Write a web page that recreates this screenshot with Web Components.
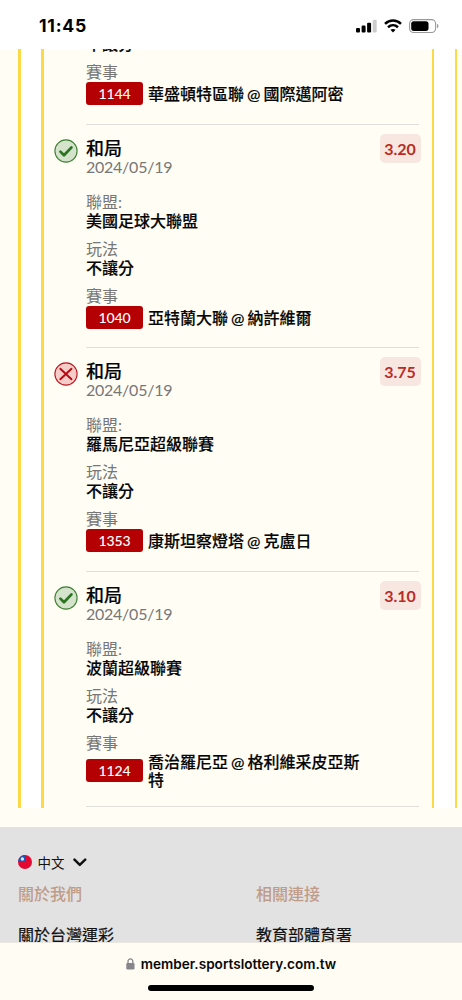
<!DOCTYPE html>
<html lang="zh-Hant">
<head>
<meta charset="utf-8">
<title>台灣運彩</title>
<style>
html,body{margin:0;height:1000px;overflow:hidden;background:#fffdf4}
body{font-family:Lato,"Noto Sans CJK TC",sans-serif}
</style>
</head>
<body>
<phone-page></phone-page>
<script>
const define = (name, html, setup) => customElements.define(name, class extends HTMLElement {
  connectedCallback() {
    if (this.shadowRoot) return;
    const t = document.createElement('template');
    t.innerHTML = html;
    this.attachShadow({mode: 'open'}).append(t.content.cloneNode(true));
    if (setup) setup(this, this.shadowRoot);
  }
});

define('status-bar', `<style>
:host{display:flex;box-sizing:border-box;height:49px;background:#fff;padding:2px 23px 0 39px;align-items:center;justify-content:space-between;font:700 17.6px/24px Inter,sans-serif;color:#000}
.t{letter-spacing:.75px}
.icons{display:flex;gap:7px;align-items:center}
svg{display:block}
</style><span class="t">11:45</span>
<div class="icons">
<svg width="21" height="14" viewBox="0 0 21 14"><rect x="0" y="9" width="4" height="4.5" rx="1.1"/><rect x="5.6" y="6.6" width="4" height="6.9" rx="1.1"/><rect x="11.1" y="3.7" width="4" height="9.8" rx="1.1"/><rect x="16.7" y=".7" width="4" height="12.8" rx="1.1" fill="#ccc"/></svg>
<svg width="18" height="14" viewBox="0 0 18 14" fill="none" stroke="#000" stroke-width="2.5"><path d="M1 4.9C5.6.5 12.4.5 17 4.9"/><path d="M4 8.3c2.9-2.6 7.1-2.6 10 0"/><path d="M6.4 10.8C8 9.6 10 9.6 11.6 10.8L9 13.5z" fill="#000" stroke="none"/></svg>
<svg width="30" height="14" viewBox="0 0 30 14"><rect x=".6" y=".6" width="26" height="12.9" rx="4" fill="none" stroke="#999" stroke-width="1.1"/><rect x="2.2" y="2.2" width="17.3" height="9.7" rx="2.6"/><path d="M28 4.8c2 .8 2 3.6 0 4.4z" fill="#999"/></svg>
</div>`);

define('result-icon', `<style>:host{display:block;width:24px;height:24px}svg{display:block}</style><svg width="24" height="24" viewBox="0 0 24 24"></svg>`, (el, root) => {
  root.querySelector('svg').innerHTML = el.getAttribute('kind') === 'lose'
    ? '<circle cx="12" cy="12" r="11.1" fill="#f4cdc8" stroke="#bd1820" stroke-width="1.1"/><path d="M6.3 6.8 17.5 17.2M17.5 6.8 6.3 17.2" stroke="#b60910" stroke-width="1.9" stroke-linecap="round"/>'
    : '<circle cx="12" cy="12" r="11.1" fill="#d5e2cc" stroke="#3c8132" stroke-width="1.1"/><path d="m6.4 12.6 3.6 3.7 7.5-7.9" fill="none" stroke="#2b7420" stroke-width="2.7" stroke-linecap="round" stroke-linejoin="round"/>';
});

define('bet-field', `<style>
:host{display:block;font-size:16px;margin-bottom:8px}
:host([last]){margin-bottom:0}
.l{height:19px;line-height:19px;color:#777}
:host([last]) .l{height:20px}
.v{line-height:20px;color:#050505;font-weight:500;-webkit-text-stroke:.15px #050505}
</style><div class="l"></div><div class="v"><slot></slot></div>`, (el, root) => {
  const l = root.querySelector('.l');
  if (el.hasAttribute('label')) l.textContent = el.getAttribute('label'); else l.remove();
});

define('match-row', `<style>
:host{display:flex;align-items:center;gap:5px;line-height:17.5px;min-height:23px}
.n{flex:none;width:57px;height:23px;border-radius:3px;background:#b40002;color:#fff;text-align:center;font:500 14px/23px Lato,sans-serif;letter-spacing:-.1px;-webkit-text-stroke:0}
.m{width:220px;word-spacing:-1px}
</style><span class="n"></span><span class="m"><slot></slot></span>`, (el, root) => {
  root.querySelector('.n').textContent = el.getAttribute('no');
});

define('bet-item', `<style>
:host{display:grid;grid-template-columns:33px 1fr;padding-left:9.5px;padding-right:13px}
.body{padding:13px 0 18.6px;border-bottom:1px solid #dfdfda}
:host(:last-of-type) .body{padding-bottom:17.6px}
.head{display:flex;justify-content:space-between;height:54px}
.title{font-size:18px;line-height:20px;font-weight:500;color:#050505;-webkit-text-stroke:.15px #050505}
.date{font-size:16px;line-height:18px;color:#777;letter-spacing:-.25px}
.odds{width:41px;height:29px;margin:-4px -2px 0 0;border-radius:5px;background:#f8e7e0;color:#b92b24;text-align:center;font:700 16px/29px Lato,sans-serif}
result-icon{margin:13.8px 0 0 .5px}
:host([partial]) .body{grid-column:2;padding-top:0}
</style><result-icon></result-icon><div class="body"><div class="head"><div><div class="title">和局</div><div class="date">2024/05/19</div></div><span class="odds"></span></div><slot></slot></div>`, (el, root) => {
  const ri = root.querySelector('result-icon');
  if (el.hasAttribute('partial')) { ri.remove(); root.querySelector('.head').remove(); return; }
  ri.replaceWith(Object.assign(document.createElement('div'), {innerHTML: `<result-icon kind="${el.getAttribute('kind')}"></result-icon>`}));
  root.querySelector('.odds').textContent = el.getAttribute('odds');
});

define('bet-ticket', `<style>
:host{display:grid;grid-template-columns:18px 2.5px 20.5px 2.5px 388px 2.5px 20.5px 2px 1fr;height:759px;overflow:hidden}
.y{background:#fcda45}.w{background:#fff}
.list{display:flex;flex-direction:column;justify-content:flex-end;padding-bottom:1.4px;overflow:hidden}
</style><i></i><i class="y"></i><i class="w"></i><i class="y"></i><div class="list"><slot></slot></div><i class="y"></i><i class="w"></i><i class="y"></i><i></i>`);

define('site-footer', `<style>
:host{display:block;box-sizing:border-box;height:115px;margin-top:19px;padding:23px 18px 0;background:#e2e2e2;overflow:hidden}
.lang{display:flex;align-items:center;height:24px;font-size:13.5px;color:#111}
.lang span{margin:0 8px 0 5.5px}
.cols{display:grid;grid-template-columns:238px 1fr;font-size:16px;line-height:24px}
.h{color:#bf9c89;font-weight:500;margin-top:8px}
.a{color:#111;margin-top:17px;-webkit-text-stroke:.2px #111}
</style>
<div class="lang"><svg width="14" height="14" viewBox="0 0 14 14"><circle cx="7" cy="7" r="7" fill="#e30832"/><path d="M0 7a7 7 0 0 1 7-7v7z" fill="#1d55b5"/><circle cx="4.4" cy="4" r="1.7" fill="#dce9ff"/></svg><span>中文</span><svg width="14" height="9" viewBox="0 0 14 9"><path d="m1.5 1.7 5.3 5.2 5.4-5.2" fill="none" stroke="#111" stroke-width="2.5" stroke-linecap="round" stroke-linejoin="round"/></svg></div>
<div class="cols"><div class="h">關於我們</div><div class="h">相關連接</div><div class="a">關於台灣運彩</div><div class="a">教育部體育署</div></div>`);

define('browser-bar', `<style>
:host{display:flex;flex-direction:column;align-items:center;box-sizing:border-box;height:58px;padding-top:11px;background:#fffcf4;border-top:1px solid #e9e7e0}
.u{display:flex;align-items:center;gap:6px;height:20px;font:600 13.6px/20px Inter,sans-serif;color:#080808;white-space:nowrap}
.bar{width:166px;height:6px;border-radius:3px;background:#000;margin-top:11px}
</style><div class="u"><svg width="9" height="12" viewBox="0 0 9 12"><rect x=".3" y="5" width="8.2" height="6.6" rx="1.3" fill="#85858a"/><path d="M2 5.4V3.3a2.4 2.4 0 0 1 4.8 0v2.1" fill="none" stroke="#85858a" stroke-width="1.3"/></svg><span>member.sportslottery.com.tw</span></div><div class="bar"></div>`);

define('phone-page', `<style>:host{display:block;width:462px;height:1000px;overflow:hidden;background:#fffdf4}</style>
<status-bar></status-bar>
<bet-ticket>
<bet-item partial><bet-field>不讓分</bet-field><bet-field label="賽事" last><match-row no="1144">華盛頓特區聯 @ 國際邁阿密</match-row></bet-field></bet-item>
<bet-item kind="win" odds="3.20"><bet-field label="聯盟:">美國足球大聯盟</bet-field><bet-field label="玩法">不讓分</bet-field><bet-field label="賽事" last><match-row no="1040">亞特蘭大聯 @ 納許維爾</match-row></bet-field></bet-item>
<bet-item kind="lose" odds="3.75"><bet-field label="聯盟:">羅馬尼亞超級聯賽</bet-field><bet-field label="玩法">不讓分</bet-field><bet-field label="賽事" last><match-row no="1353">康斯坦察燈塔 @ 克盧日</match-row></bet-field></bet-item>
<bet-item kind="win" odds="3.10"><bet-field label="聯盟:">波蘭超級聯賽</bet-field><bet-field label="玩法">不讓分</bet-field><bet-field label="賽事" last><match-row no="1124">喬治羅尼亞 @ 格利維采皮亞斯特</match-row></bet-field></bet-item>
</bet-ticket>
<site-footer></site-footer>
<browser-bar></browser-bar>`);
</script>
</body>
</html>
